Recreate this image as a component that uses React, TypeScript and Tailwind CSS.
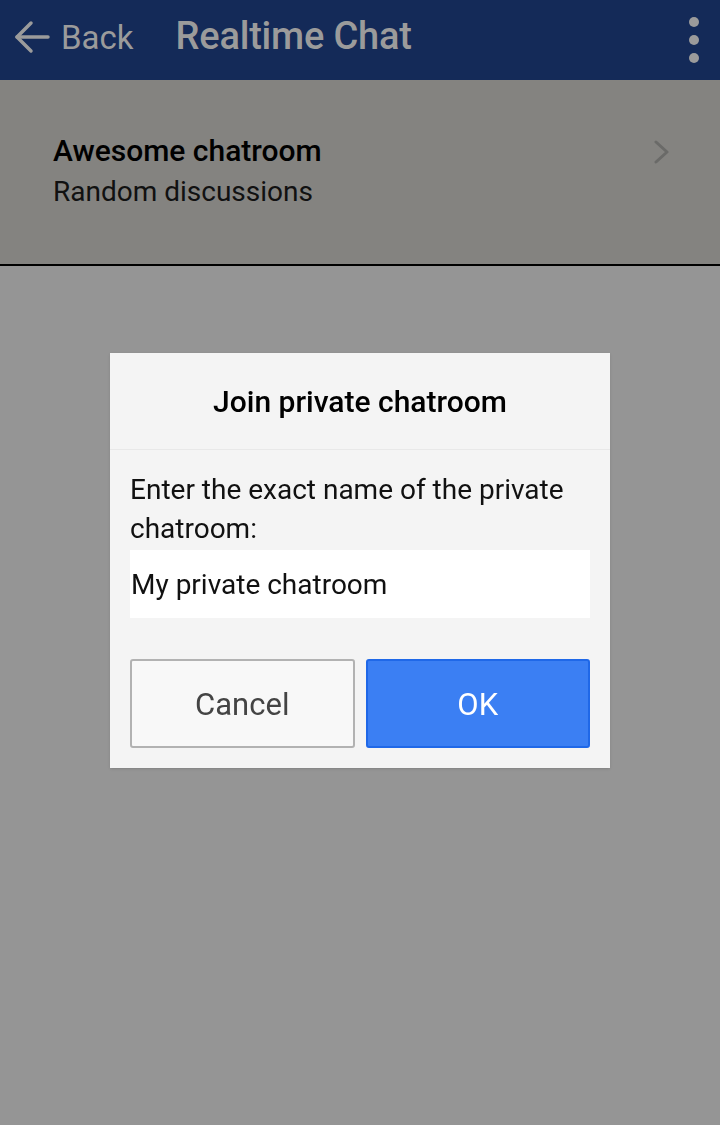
export default function App() {
  return (
    <div className="relative min-h-[1125px] bg-[#959595]" style={{ fontFamily: 'Roboto, "Noto Sans", sans-serif' }}>
      <header className="h-[80px] bg-[#142a58] flex items-center text-[#9b9b9b]">
        <div className="flex items-center pl-[14px] mb-[6px]">
          <svg width="36" height="34" viewBox="0 0 36 34" fill="none" stroke="currentColor" strokeWidth="3.5" strokeLinecap="round" strokeLinejoin="round">
            <path d="M34 17H3" />
            <path d="M17 3 3 17l14 14" />
          </svg>
          <span className="ml-[11px] text-[33px] leading-none">Back</span>
        </div>
        <h1 className="ml-[42px] mb-[9px] text-[38px] font-medium leading-none tracking-[-0.2px]">Realtime Chat</h1>
        <div className="ml-auto mr-[21px] flex flex-col gap-[8px]">
          <span className="block w-[10px] h-[10px] rounded-full bg-[#9b9b9b]" />
          <span className="block w-[10px] h-[10px] rounded-full bg-[#9b9b9b]" />
          <span className="block w-[10px] h-[10px] rounded-full bg-[#9b9b9b]" />
        </div>
      </header>

      <div className="h-[186px] bg-[#848380] border-b-2 border-black flex items-start pl-[53px] pr-[51px] pt-[51px]">
        <div className="flex-1">
          <div className="text-[30px] font-medium text-black leading-[40px]">Awesome chatroom</div>
          <div className="text-[28px] text-[#111] leading-[40px] mt-[1px]">Random discussions</div>
        </div>
        <svg width="16" height="24" viewBox="0 0 16 24" fill="none" stroke="#6a6a68" strokeWidth="3" strokeLinecap="round" strokeLinejoin="round" className="mt-[9px]">
          <path d="M3 2l11 10L3 22" />
        </svg>
      </div>

      <div className="fixed inset-0 flex items-center justify-center">
        <div className="w-[500px] mb-[4px] bg-[#f4f4f4] shadow-sm">
          <div className="h-[97px] flex items-center justify-center border-b border-[#e8e8e8]">
            <span className="text-[30px] font-medium text-black">Join private chatroom</span>
          </div>
          <div className="px-[20px] pt-[20px] pb-[20px]">
            <p className="text-[28px] leading-[39px] text-[#111]">
              Enter the exact name of the private chatroom:
            </p>
            <input
              readOnly
              value="My private chatroom"
              className="mt-[2px] w-full h-[68px] bg-white px-[1px] text-[28px] text-[#111] outline-none"
            />
            <div className="mt-[41px] flex gap-[11px]">
              <button className="flex-1 h-[89px] pt-[3px] rounded-[3px] border-2 border-[#b2b2b2] bg-[#f8f8f8] text-[31px] text-[#444]">
                Cancel
              </button>
              <button className="flex-1 h-[89px] pt-[3px] rounded-[3px] border-2 border-[#1f68e8] bg-[#3b7ff3] text-[31px] text-white">
                OK
              </button>
            </div>
          </div>
        </div>
      </div>
    </div>
  );
}
